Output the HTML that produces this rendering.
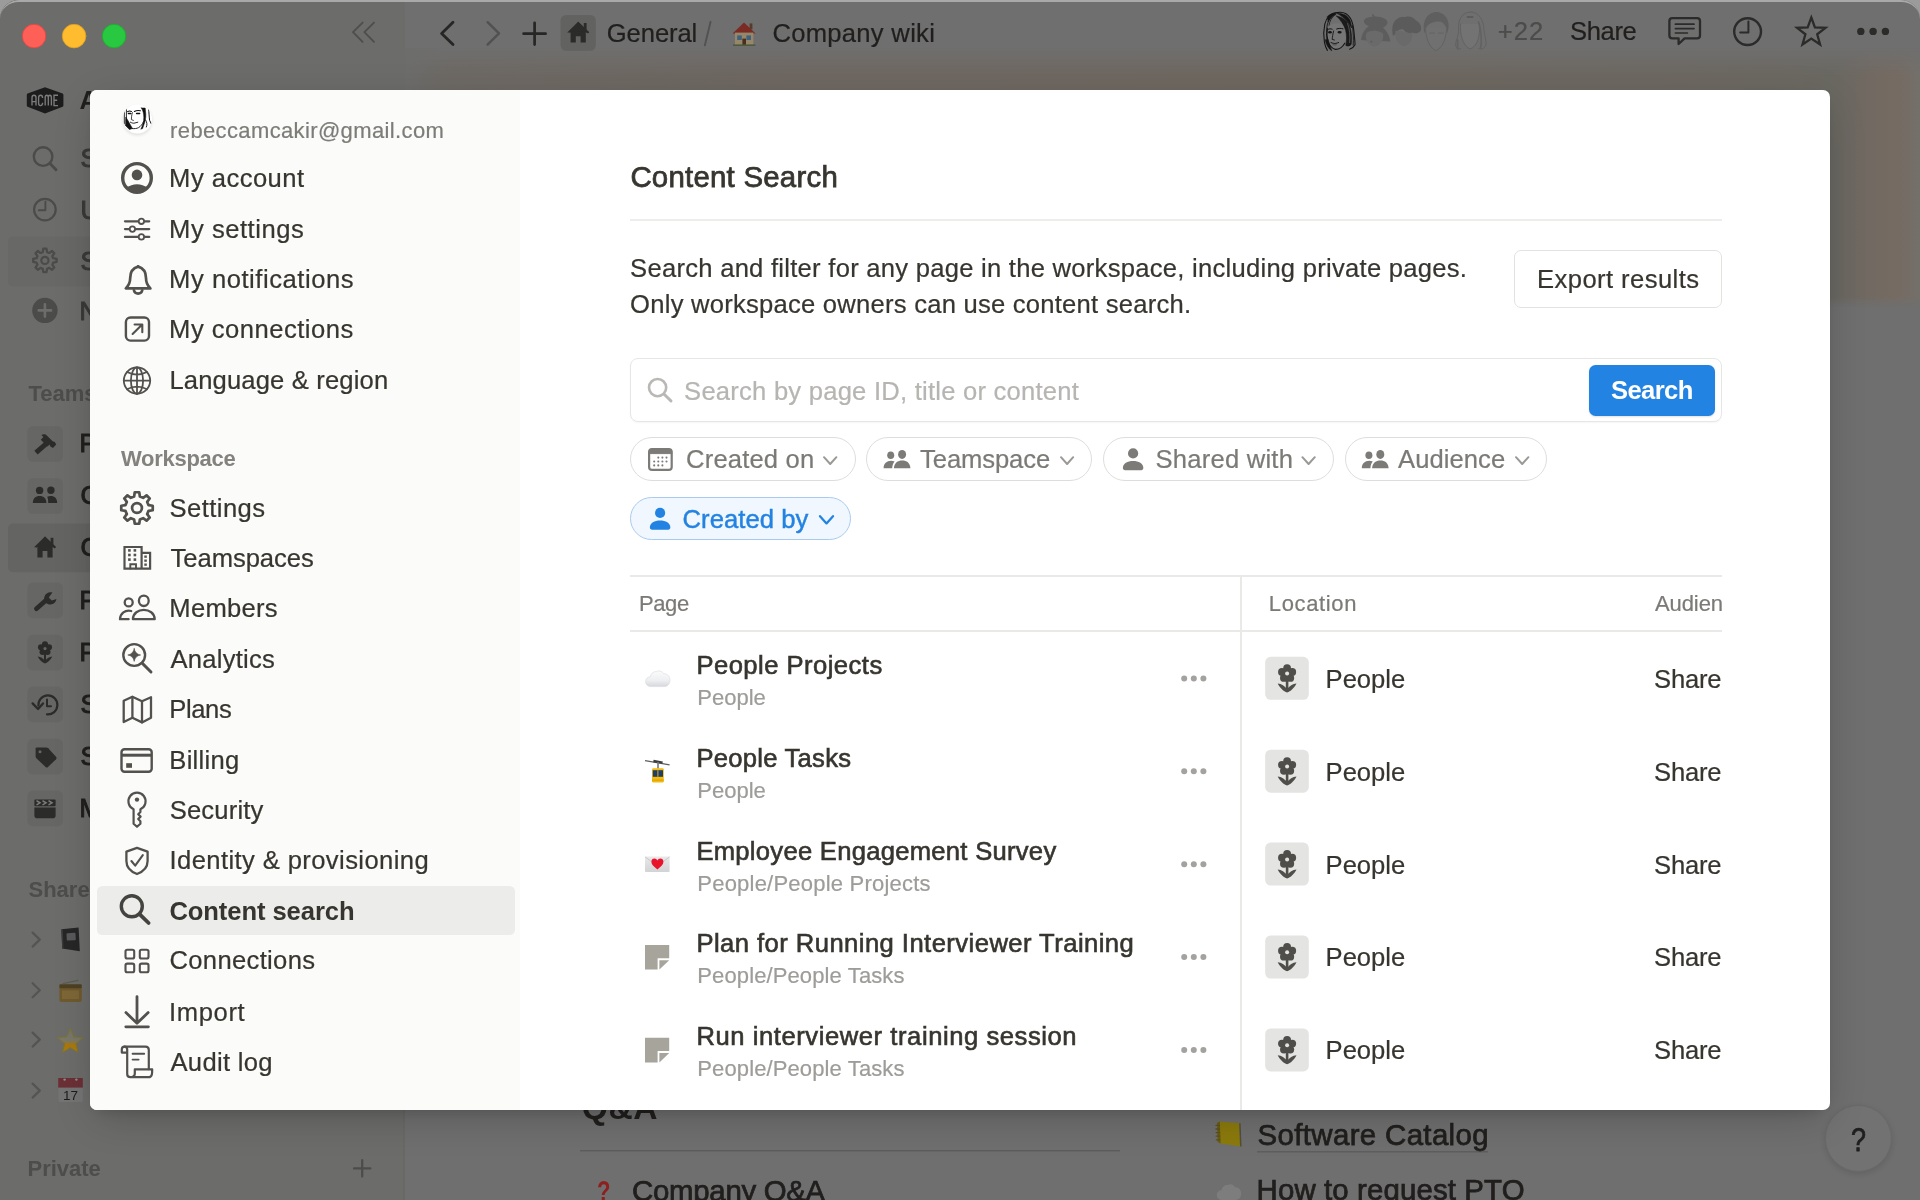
<!DOCTYPE html>
<html>
<head>
<meta charset="utf-8">
<title>Content Search</title>
<style>
*{box-sizing:border-box;margin:0;padding:0}
html,body{width:1920px;height:1200px;overflow:hidden;background:#9b9b9b;font-family:"Liberation Sans",sans-serif;}
#win{position:absolute;left:0;top:0;width:1920px;height:1200px;border-radius:19px 19px 0 0;overflow:hidden;background:#6f6f6f;}
#topline{position:absolute;left:0;top:0;width:1920px;height:60px;border-top:2px solid #a9a9a9;border-radius:19px 19px 0 0;z-index:9}
.abs{position:absolute}
.t{position:absolute;white-space:nowrap;line-height:1;transform-origin:0 50%}
#bgside{position:absolute;left:0;top:0;width:405px;height:1200px;background:#6c6c6b}
#cover{position:absolute;left:405px;top:48px;width:1515px;height:260px;background:linear-gradient(90deg,#6d6964 0,#6f6862 25%,#6f6861 60%,#6c6862 92%,#696861 94.2%,#6d6862 95.4%,#736a62 97.2%,#756b63 98.6%,#73706a 100%);-webkit-mask-image:linear-gradient(180deg,transparent 0,rgba(0,0,0,.5) 12px,#000 27px,#000 249px,transparent 259px);mask-image:linear-gradient(180deg,transparent 0,rgba(0,0,0,.5) 12px,#000 27px,#000 249px,transparent 259px)}
#shadow{position:absolute;left:96px;top:96px;width:1728px;height:1010px;border-radius:8px;box-shadow:0 9px 40px rgba(0,0,0,.22),0 5px 14px rgba(0,0,0,.14),0 0 0 1px rgba(0,0,0,.04)}
#modal{position:absolute;left:90px;top:90px;width:1740px;height:1020px;background:#fff;border-radius:7px;overflow:hidden;}
#mside{position:absolute;left:0;top:0;width:430px;height:1020px;background:#fbfbfa}
#sel{position:absolute;left:7.3px;top:796.2px;width:417.8px;height:48.4px;border-radius:5.5px;background:#ececeb}

#clipr{position:absolute;left:0;top:0;width:1722px;height:1200px;overflow:hidden;will-change:transform}
.hl{position:absolute;background:#e9e9e7}
.pill{position:absolute;border:1.4px solid #dddddb;border-radius:22px;background:#fff}
</style>
</head>
<body>
<div id="win">
  <div id="bgside"></div>
  <div id="cover"></div>
  <div class="abs" style="left:405px;top:48px;width:44px;height:262px;background:linear-gradient(90deg,#6d6d6c 0,rgba(110,110,109,0) 100%)"></div>
  <div class="abs" style="left:403.4px;top:306px;width:1.6px;height:894px;background:#696968"></div>
  <div class="abs" style="left:0;top:0;width:1920px;height:1200px;will-change:transform">
  <svg class="abs" style="left:0;top:0" width="1920" height="1200" viewBox="0 0 1920 1200" fill="none" stroke-linecap="round" stroke-linejoin="round">
<circle cx="34.1" cy="36.1" r="11.8" fill="#fe5f57" stroke="#e2463f" stroke-width="0.8"/>
<circle cx="74.1" cy="36.1" r="11.8" fill="#febc2e" stroke="#dfa023" stroke-width="0.8"/>
<circle cx="114.1" cy="36.1" r="11.8" fill="#28c840" stroke="#1dab2f" stroke-width="0.8"/>
<path d="M362.6 22.6 L353 32.2 L362.6 41.8 M374 22.6 L364.4 32.2 L374 41.8" stroke="#4e4e4d" stroke-width="1.9"/>
<path d="M453 22.2 L441.6 33.4 L453 44.6" stroke="#262625" stroke-width="2.8"/>
<path d="M487.6 22.2 L499 33.4 L487.6 44.6" stroke="#515150" stroke-width="2.4"/>
<path d="M534.6 22.8 V44.6 M523.6 33.7 H545.6" stroke="#262625" stroke-width="2.7"/>
<rect x="560.6" y="15" width="35.2" height="35.8" rx="5.5" fill="#626261" stroke="none"/>
<g stroke="none" fill="#2b2b2a"><path d="M578.2 21.8 L589.2 32.2 L587.8 33.6 L578.2 25.0 L568.6 33.6 Z"/><path d="M578.2 21.8 L589.2 32.4 L567.2 32.4 Z"/><rect x="583.8" y="23.0" width="2.8" height="7" /><path d="M570.6 31.2 H585.8 V42.6 H580.6 V36.2 H575.8 V42.6 H570.6 Z"/></g>
<path d="M710.6 21.8 L704.8 45.4" stroke="#525251" stroke-width="1.9"/>
<g stroke="none"><path d="M732.6 33.4 L744 22.6 L755.6 33.4 Z" fill="#7a2c24"/><rect x="749.6" y="23.4" width="2.8" height="6" fill="#5a3a2a"/><rect x="735" y="32.6" width="18.4" height="12.6" fill="#97876a"/><rect x="737.2" y="35.4" width="4.6" height="4.6" fill="#3c627e"/><rect x="746.4" y="35.4" width="4.6" height="4.6" fill="#3c627e"/><rect x="742.4" y="38.6" width="3.6" height="6.6" fill="#4a2e1e"/><rect x="733" y="44.4" width="22.4" height="1.6" fill="#4d5a3c"/></g>
<g transform="translate(1323 11.6)" stroke="#151515" fill="none" stroke-linecap="round" stroke-linejoin="round"><path d="M4.4 17 C3.6 21 4 26 5.2 29.8 C6.6 33.8 9.2 37 12.6 37.8 C16.6 38 20 35 22.2 31 C23.4 27 23.8 22 23.2 17 C20 10 8 10 4.4 17 Z" fill="#767676" stroke="none"/><path d="M14 1 C8 1.2 3.4 5.8 1.8 12.6 C0.6 18 0.4 25 1.4 30.6 C2 34 3 36.6 4.4 38.8" stroke-width="1.1"/><path d="M14 1 C19.4 0 24.4 1.8 27.4 6.6 C29.8 10.6 30.8 16.6 31.2 22.6 C31.6 27.6 32.2 31 32 33.2 C31 35.4 29 36.8 26.6 37.6" stroke-width="1.1"/><path d="M13 2.4 C8.6 4 5.4 8 4.2 13.4 C3.4 18 3.4 24 4 28" stroke-width="0.9"/><path d="M11.6 3.6 C8.4 6 6.6 9.6 6 13.6" stroke-width="0.8"/><path d="M4.4 4.8 C7 2.4 10.4 1.4 13 2.2 C9.400 4 6.600 6.8 5.200 10 Z" fill="#151515" stroke-width="0.5"/><path d="M14.6 2 C19.6 1.4 24.4 3.6 26.6 8 C27.8 10.6 28.4 13.6 28.6 16.4 C26 11 21.6 6 14.6 2 Z" fill="#151515" stroke-width="0.6"/><path d="M13.4 4.400 C17.6 8.4 21 13 22.600 18.6 C23.800 23.6 23.800 29 22.800 33.800 C24.600 35 26.800 34.600 28.200 32.800 C29 27 28.600 20 26.800 14.600 C24.600 9.200 19.600 5.400 13.400 4.400 Z" fill="#1b1b1b" stroke-width="0.5"/><path d="M24.6 12 C26.6 17 27.4 24 26.6 31" stroke="#6a6a6a" stroke-width="0.7"/><path d="M29.4 14 C30.2 20 30.600 27 30.200 33.600" stroke-width="0.9"/><path d="M4.4 16.8 C3.6 20.8 3.8 25.8 5 29.8 C6.4 33.8 9 37 12.4 37.8 C16.4 38 19.600 35.200 21.800 31.600" stroke-width="1.1"/><path d="M2.2 28.4 C3 33 5.4 37.200 8.800 39.200 C7.200 35 6 31.200 5 27.600 Z" fill="#151515" stroke-width="0.5"/><path d="M4.8 18 C6 17 7.800 17 9.200 17.600 M13.600 17.400 C15.600 16.600 17.800 16.600 20 17.200" stroke-width="1"/><ellipse cx="7" cy="20.6" rx="1.9" ry="1.2" fill="#151515" stroke="none"/><ellipse cx="16.6" cy="20.6" rx="2.1" ry="1.2" fill="#151515" stroke="none"/><path d="M10.600 19.400 C9.800 22.600 9.400 25.600 9.200 27.800 L11.400 28.400" stroke-width="0.9"/><path d="M8 31 C10 31.800 11.600 32 12.800 31.800 C14 31.600 14.800 31.200 15.600 30.900" stroke-width="1"/><path d="M10 33.200 H13.200" stroke-width="0.7" stroke="#3a3a3a"/></g><g stroke="none"><path d="M1361 40 C1362 33 1365 29 1369 26 C1363 24 1362 19 1368 17.4 C1374 15.6 1382 16.2 1386 19.6 C1389 22.6 1387 26 1383 27.4 C1387 31 1389.6 36 1390.4 41.4 L1381.6 41 C1382 36 1379 31.6 1374.6 30.4 C1370 31.6 1367 36 1367.6 40.6 Z" fill="#5d5d5d"/><path d="M1372.600 14.800 L1374.800 17.600" stroke="#5d5d5d" stroke-width="1.4"/><path d="M1366.4 33 C1364.6 39 1367.600 45.000 1374.000 46.600 C1380.400 45.600 1384.400 40.000 1383.000 33.600 C1380 30 1370 29.600 1366.400 33 Z" fill="#6a6a6a"/><circle cx="1371.4" cy="41.6" r="0.9" fill="#585858"/></g><g stroke="none"><path d="M1393 36 C1391.4 28 1392.6 21.6 1397 19 C1400 16.4 1404 17.4 1406 16.8 C1410 15.600 1414 17.600 1416 20.600 C1420 22.600 1422.400 27.000 1420.600 31.000 C1418 34.000 1414 33.600 1412 32.600 C1409 34 1405 32.600 1403.600 29.600 C1400 28.600 1397.600 30.000 1396.400 33.000 Z" fill="#5b5b5b"/><path d="M1395.4 31.000 C1394.600 38.000 1397.600 44.600 1403.600 46.200 C1409.600 45.600 1412.400 40.000 1412.400 33.000 C1406 33.600 1400 30.000 1395.400 31.000 Z" fill="#6a6a6a"/></g><g><path d="M1424.6 33.6 C1422 24 1425 14.6 1434 12.2 C1443 11 1449 18 1448.600 26.000 C1448.400 29.600 1447.600 32.000 1447.000 33.600 C1447 27.000 1444 22.600 1440.000 21.600 C1434 21.000 1428 23.600 1426.400 27.600 C1425.800 29.600 1425.400 31.600 1424.600 33.600 Z" fill="#5f5f5f" stroke="none"/><path d="M1425.6 27.600 C1425.400 36.000 1428.400 47.000 1435.600 50.600 C1442.600 48.600 1446.400 38.000 1446.600 27.600" fill="#707070" stroke="#626262" stroke-width="1"/><path d="M1429.600 33.000 H1434.400 M1438.400 33.000 H1443.200" stroke="#626262" stroke-width="0.9"/></g><g fill="none" stroke="#626262" stroke-width="1"><path d="M1470.600 12.000 C1462 12.000 1457.600 20.000 1458.600 30.000 C1458.800 36.000 1455.600 40.000 1455.600 45.000 C1456.600 48.600 1458.600 49.600 1460.600 48.600"/><path d="M1470.600 12.000 C1479 12.000 1483.600 20.000 1484.000 30.000 C1484.400 36.000 1486.600 40.000 1486.000 45.000 C1484.600 48.600 1481.600 49.600 1478.600 48.600"/><path d="M1460.600 24.000 C1459.600 34.000 1462.600 45.600 1470.000 49.000 C1477.400 46.600 1480.400 36.000 1479.600 24.000" fill="#737373"/><path d="M1467.600 17.000 H1472.600" stroke="#5c5c5c" stroke-width="1.8"/><path d="M1478.600 22.000 C1481 30.000 1482.000 40.000 1480.600 48.000" stroke-width="1.6"/><path d="M1457.600 40 V49" stroke-width="1.6"/></g>
<path d="M1672.2 18.2 H1697.2 C1699 18.2 1700 19.2 1700 21 V35.6 C1700 37.4 1699 38.4 1697.2 38.4 H1684.6 L1678.6 44 V38.4 H1672.2 C1670.4 38.4 1669.4 37.4 1669.4 35.6 V21 C1669.4 19.2 1670.4 18.2 1672.2 18.2 Z" stroke="#2b2b2a" stroke-width="2.3"/>
<path d="M1675.4 24.2 H1694 M1675.4 28.6 H1694 M1675.4 33 H1687.4" stroke="#2b2b2a" stroke-width="1.7"/>
<circle cx="1747.6" cy="31.6" r="13.4" stroke="#2b2b2a" stroke-width="2.4"/><path d="M1748.4 21.6 V32.4 H1740.2" stroke="#2b2b2a" stroke-width="2"/>
<path d="M1811.3 17.5 L1814.9 27.4 L1825.5 27.8 L1817.2 34.3 L1820.1 44.5 L1811.3 38.6 L1802.5 44.5 L1805.4 34.3 L1797.1 27.8 L1807.7 27.4Z" stroke="#2b2b2a" stroke-width="2.3" stroke-linejoin="miter"/>
<circle cx="1860.8" cy="31.4" r="3.7" fill="#2b2b2a"/>
<circle cx="1873.1" cy="31.4" r="3.7" fill="#2b2b2a"/>
<circle cx="1885.4" cy="31.4" r="3.7" fill="#2b2b2a"/>
<path d="M45 87.2 L62.6 93.6 Q63.4 94 63.4 95 V105.4 Q63.4 106.4 62.6 106.8 L45 113.4 L27.6 106.8 Q26.8 106.4 26.8 105.4 V95 Q26.8 94 27.6 93.6 Z" fill="#1c1c1c"/>
<g stroke="#7c7c7c" stroke-width="1.35" stroke-linecap="butt" stroke-linejoin="miter"><path d="M32 105.6 V97.8 Q32 95.2 34 95.2 Q36 95.2 36 97.8 V105.6 M32 101.6 H36"/><path d="M42.6 98 Q42.6 95.2 40.6 95.2 Q38.6 95.2 38.6 97.8 V103 Q38.6 105.6 40.6 105.6 Q42.6 105.6 42.6 102.8"/><path d="M45.2 105.6 V97.6 Q45.2 95.2 46.8 95.2 Q48.3 95.2 48.3 97.6 V105.6 M48.3 97.6 Q48.3 95.2 49.8 95.2 Q51.400 95.2 51.400 97.600 V105.6"/><path d="M58 95.2 H54 V105.6 H58 M54 100.200 H57.200"/></g>
<circle cx="43.1" cy="156.6" r="9.3" stroke="#4b4b4a" stroke-width="2.4"/><path d="M50 163.6 L56 169.8" stroke="#4b4b4a" stroke-width="2.9"/>
<circle cx="44.9" cy="209.6" r="10.8" stroke="#4b4b4a" stroke-width="2.2"/><path d="M45.4 201.6 V210.2 H38.8" stroke="#4b4b4a" stroke-width="1.9"/>
<rect x="8" y="236.4" width="392" height="50" rx="5" fill="#686867"/>
<path d="M42.70 252.09 L43.33 248.71 L46.47 248.71 L47.10 252.09 L49.22 252.96 L52.06 251.02 L54.28 253.24 L52.34 256.08 L53.21 258.20 L56.59 258.83 L56.59 261.97 L53.21 262.60 L52.34 264.72 L54.28 267.56 L52.06 269.78 L49.22 267.84 L47.10 268.71 L46.47 272.09 L43.33 272.09 L42.70 268.71 L40.58 267.84 L37.74 269.78 L35.52 267.56 L37.46 264.72 L36.59 262.60 L33.21 261.97 L33.21 258.83 L36.59 258.20 L37.46 256.08 L35.52 253.24 L37.74 251.02 L40.58 252.96Z" stroke="#4b4b4a" stroke-width="2.3"/><circle cx="44.9" cy="260.4" r="3.6" stroke="#4b4b4a" stroke-width="2.2"/>
<circle cx="44.9" cy="310.4" r="12.7" fill="#4b4b4a"/><path d="M44.9 304.2 V316.6 M38.7 310.4 H51.1" stroke="#6d6d6c" stroke-width="2.6"/>
<rect x="27.4" y="426.2" width="35.6" height="35.6" rx="5.5" fill="#666665"/>
<rect x="27.4" y="478.2" width="35.6" height="35.6" rx="5.5" fill="#666665"/>
<rect x="27.4" y="582.6" width="35.6" height="35.6" rx="5.5" fill="#666665"/>
<rect x="27.4" y="634.8" width="35.6" height="35.6" rx="5.5" fill="#666665"/>
<rect x="27.4" y="686.6" width="35.6" height="35.6" rx="5.5" fill="#666665"/>
<rect x="27.4" y="738.8" width="35.6" height="35.6" rx="5.5" fill="#666665"/>
<rect x="27.4" y="790.6" width="35.6" height="35.6" rx="5.5" fill="#666665"/>
<rect x="8" y="523.6" width="392" height="48.6" rx="5" fill="#646463"/>
<path d="M36 452.6 L46.6 443.4" stroke="#2b2b2a" stroke-width="5" stroke-linecap="butt"/><path d="M41.4 435 C43.6 433.6 45.6 434.2 46.8 435.4 L52.6 441.2 L54.8 442 L56.2 444.6 L53 448 L50.4 446.6 L49.6 444.6 L47.4 446.4 L40.8 439.8 L43.4 437 Z" fill="#2b2b2a"/>
<g fill="#2b2b2a"><circle cx="39.6" cy="490.4" r="3.7"/><circle cx="50.9" cy="490.2" r="3.7"/><path d="M32.8 503 C32.8 498.4 35.6 496 39.6 496 C43.6 496 46.4 498.4 46.4 503 Z"/><path d="M47.2 496.8 C48.2 496.2 49.4 496 50.8 496 C54.6 496 57.2 498.4 57.2 503 H48.2 C48.2 500.4 48 498.4 47.2 496.8 Z"/></g>
<g stroke="none" fill="#2b2b2a"><path d="M45.0 536.6 L56.0 547.0 L54.6 548.4 L45.0 539.8 L35.4 548.4 Z"/><path d="M45.0 536.6 L56.0 547.2 L34.0 547.2 Z"/><rect x="50.6" y="537.8" width="2.8" height="7" /><path d="M37.4 546.0 H52.6 V557.4 H47.4 V551.0 H42.6 V557.4 H37.4 Z"/></g>
<path d="M36.4 608.8 L46 600.2" stroke="#2b2b2a" stroke-width="4.6"/><path d="M52.4 592.6 C49 591.6 45.4 593.4 44.4 596.8 C43.8 599 44.4 601 45.6 602.4 C47.6 604.6 50.8 605 53.2 603.8 C55 602.8 56.2 601 56.4 599 L51.8 600.6 L48.8 597.6 Z" fill="#2b2b2a"/>
<g transform="translate(45 648.6) scale(0.78) translate(-45 -648.6)"><circle cx="45.00" cy="643.20" r="3.9" fill="#2b2b2a"/><circle cx="50.14" cy="646.93" r="3.9" fill="#2b2b2a"/><circle cx="48.17" cy="652.97" r="3.9" fill="#2b2b2a"/><circle cx="41.83" cy="652.97" r="3.9" fill="#2b2b2a"/><circle cx="39.86" cy="646.93" r="3.9" fill="#2b2b2a"/><circle cx="45.00" cy="648.60" r="4.6" fill="#2b2b2a"/><circle cx="45.00" cy="648.60" r="2" fill="#666665"/><path d="M45.00 654.60 V665.80" stroke="#2b2b2a" stroke-width="2.6" fill="none"/><path d="M45.00 667.60 C41.50 666.60 38.00 663.10 35.60 658.60 C39.50 658.80 42.60 661.00 45.00 664.20 C47.40 661.00 50.50 658.80 54.40 658.60 C52.00 663.10 48.50 666.60 45.00 667.60 Z" fill="#2b2b2a"/></g>
<path d="M47 714.4 A9.5 9.5 0 1 0 38.4 705.6" stroke="#2b2b2a" stroke-width="2.2"/><path d="M32.6 703.4 L38 709 L43 703.4" stroke="#2b2b2a" stroke-width="2.3"/><path d="M47 699.6 V706.2 H51" stroke="#2b2b2a" stroke-width="2"/>
<path d="M36.8 747.4 H46.2 C47 747.4 47.6 747.6 48.2 748.2 L56 756.8 Q57 758 56 759.2 L48 767 Q46.8 768 45.6 767 L36.6 758.4 C36 757.8 35.6 757.2 35.6 756.4 V748.6 Q35.6 747.4 36.8 747.4 Z" fill="#2b2b2a"/><circle cx="40" cy="751.8" r="1.5" fill="#666665"/>
<path d="M34.4 807.6 H55.6 V815.4 Q55.6 818.2 52.8 818.2 H37.2 Q34.4 818.2 34.4 815.4 Z" fill="#2b2b2a"/><rect x="34.4" y="799.4" width="21.2" height="6.8" rx="1" fill="#2b2b2a"/><path d="M37 801 L40 802.8 L37 804.6 M43 801 L46 802.8 L43 804.6 M49 801 L52 802.8 L49 804.6" stroke="#7a7a79" stroke-width="1.5" stroke-linejoin="miter"/>
<path d="M32.6 932.6 L39.8 939.6 L32.6 946.6" stroke="#545453" stroke-width="2.2"/>
<path d="M32.6 983.2 L39.8 990.2 L32.6 997.2" stroke="#545453" stroke-width="2.2"/>
<path d="M32.6 1032.6 L39.8 1039.6 L32.6 1046.6" stroke="#545453" stroke-width="2.2"/>
<path d="M32.6 1083.6 L39.8 1090.6 L32.6 1097.6" stroke="#545453" stroke-width="2.2"/>
<g stroke="none"><path d="M61.4 929.2 L78.6 927.6 L79.8 951.2 L62.2 948.6 Z" fill="#262627"/><path d="M61.4 929.2 L62.2 948.6 L63.6 949 L62.8 929.6 Z" fill="#3b3b3d"/><rect x="66.6" y="933" width="9" height="7.4" rx="1" fill="#59595b" transform="rotate(-3 71 936)"/></g>
<g stroke="none"><rect x="59.4" y="986.4" width="22.4" height="15.6" rx="2" fill="#6f5a2e"/><rect x="59.4" y="984.2" width="22.4" height="4" rx="1" fill="#4f4022"/><path d="M63 983.6 L78 980.4" stroke="#5c5c4c" stroke-width="1.2"/><rect x="62" y="990.4" width="17" height="8.6" fill="#7d6737"/></g>
<defs><linearGradient id="stg" x1="0" y1="0" x2="0" y2="1"><stop offset="0" stop-color="#76756d"/><stop offset="0.5" stop-color="#7a786a"/><stop offset="0.68" stop-color="#a9780c"/><stop offset="1" stop-color="#b07c08"/></linearGradient></defs>
<path d="M70.3 1028.4 L73.8 1036.9 L83.0 1037.7 L76.0 1043.7 L78.2 1052.6 L70.3 1047.8 L62.4 1052.6 L64.6 1043.7 L57.6 1037.7 L66.8 1036.9Z" fill="url(#stg)" stroke="#7c7538" stroke-width="1.1" stroke-linejoin="round"/>
<g stroke="none"><rect x="58.2" y="1078" width="24.6" height="24" rx="1.5" fill="#747474"/><rect x="58.2" y="1078" width="24.6" height="9.6" fill="#6b3036"/><circle cx="64.6" cy="1079.6" r="1.2" fill="#8d8d8d"/><circle cx="76.4" cy="1079.6" r="1.2" fill="#8d8d8d"/><text x="70.4" y="1100" font-family="Liberation Sans" font-size="13.5" text-anchor="middle" fill="#1b1b1b">17</text></g>
<path d="M362.2 1160.2 V1176.6 M354 1168.4 H370.4" stroke="#4c4c4b" stroke-width="2.2"/>
<rect x="580" y="1150" width="540" height="1.4" fill="#5d5d5d" stroke="none"/>
<rect x="1257" y="1151.2" width="231" height="1.2" fill="#5a5a5a" stroke="none"/>
<g stroke="none"><path d="M1219.6 1121.6 L1240.6 1123.2 L1241.6 1146.6 L1220.4 1143.6 Z" fill="#8b7a0c"/><path d="M1217 1123 L1219.8 1121.6 L1220.6 1143.6 L1217.6 1142 Z" fill="#6a5c0a"/><path d="M1240.6 1123.2 L1241.6 1146.6 L1240 1146.4 L1239.2 1123.2 Z" fill="#4e4e4a"/><path d="M1216 1125.4 h3.4 M1216 1129 h3.4 M1216.2 1132.6 h3.4 M1216.2 1136.2 h3.4 M1216.4 1139.8 h3.4" stroke="#5a5026" stroke-width="1.3"/></g>
<path d="M1222 1200 C1218.6 1200 1216.8 1197.6 1216.8 1195 C1216.800 1192.200 1219.000 1190.200 1221.600 1190.200 C1222.000 1187.000 1224.600 1184.800 1227.600 1185.000 C1229.200 1184.000 1233.000 1183.800 1235.000 1187.200 C1238.800 1187.000 1241.200 1189.800 1241.200 1193.600 C1241.200 1197.400 1238.800 1200.000 1235.400 1200.000 Z" fill="#7d7d7e" stroke="none"/>
<defs><filter id="hsh" x="-30%" y="-30%" width="160%" height="160%"><feGaussianBlur stdDeviation="3"/></filter></defs><circle cx="1858.4" cy="1140.4" r="33.5" fill="#000" opacity="0.12" filter="url(#hsh)"/><circle cx="1858.4" cy="1138.4" r="33" fill="#727272" stroke="#696969" stroke-width="1"/>
</svg>
  <span class="t" style="left:606.81px;top:19px;font-size:25.60px;line-height:28px;color:#201f1d;letter-spacing:-0.098px;-webkit-text-stroke:0.22px #201f1d;">General</span>
<span class="t" style="left:772.41px;top:19px;font-size:25.60px;line-height:28px;color:#201f1d;letter-spacing:0.288px;-webkit-text-stroke:0.22px #201f1d;">Company wiki</span>
<span class="t" style="left:1497.71px;top:17px;font-size:25.60px;line-height:28px;color:#4c4c4b;letter-spacing:1.000px;-webkit-text-stroke:0.22px #4c4c4b;">+22</span>
<span class="t" style="left:1570.11px;top:17px;font-size:25.60px;line-height:28px;color:#201f1d;letter-spacing:-0.395px;-webkit-text-stroke:0.22px #201f1d;">Share</span>
<span class="t" style="left:581.70px;top:1089px;font-size:33.60px;line-height:37px;color:#201f1d;letter-spacing:0.616px;font-weight:bold;">Q&amp;A</span>
<span class="t" style="left:632.08px;top:1174px;font-size:29.40px;line-height:33px;color:#201f1d;letter-spacing:-0.287px;-webkit-text-stroke:0.75px #201f1d;">Company Q&amp;A</span>
<span class="t" style="left:1257.58px;top:1118px;font-size:29.40px;line-height:33px;color:#201f1d;letter-spacing:0.370px;-webkit-text-stroke:0.75px #201f1d;">Software Catalog</span>
<span class="t" style="left:1256.58px;top:1173px;font-size:29.40px;line-height:33px;color:#201f1d;letter-spacing:0.129px;-webkit-text-stroke:0.75px #201f1d;">How to request PTO</span>
<span class="t" style="left:596.55px;top:1174px;font-size:29.40px;line-height:33px;color:#8e1f1f;transform:scaleX(0.7500);font-weight:bold;">?</span>
<span class="t" style="left:1850.96px;top:1121px;font-size:33.00px;line-height:37px;color:#1f1f1f;transform:scaleX(0.8147);-webkit-text-stroke:0.75px #1f1f1f;">?</span>
<span class="t" style="left:79.60px;top:86px;font-size:25.60px;line-height:28px;color:#201f1d;font-weight:bold;">Acme Inc.</span>
<span class="t" style="left:80.40px;top:144px;font-size:25.60px;line-height:28px;color:#3a3a39;-webkit-text-stroke:0.95px #3a3a39;">Search</span>
<span class="t" style="left:80.40px;top:196px;font-size:25.60px;line-height:28px;color:#3a3a39;-webkit-text-stroke:0.95px #3a3a39;">Updates</span>
<span class="t" style="left:80.40px;top:247px;font-size:25.60px;line-height:28px;color:#3a3a39;-webkit-text-stroke:0.95px #3a3a39;">Settings &amp; members</span>
<span class="t" style="left:79.40px;top:297px;font-size:25.60px;line-height:28px;color:#3a3a39;-webkit-text-stroke:0.95px #3a3a39;">New page</span>
<span class="t" style="left:28.50px;top:381px;font-size:22.00px;line-height:25px;color:#4d4d4c;font-weight:bold;">Teamspaces</span>
<span class="t" style="left:79.40px;top:429px;font-size:25.60px;line-height:28px;color:#201f1d;-webkit-text-stroke:0.95px #201f1d;">Product</span>
<span class="t" style="left:80.40px;top:481px;font-size:25.60px;line-height:28px;color:#201f1d;-webkit-text-stroke:0.95px #201f1d;">Company</span>
<span class="t" style="left:80.40px;top:533px;font-size:25.60px;line-height:28px;color:#201f1d;-webkit-text-stroke:0.95px #201f1d;">General</span>
<span class="t" style="left:79.40px;top:586px;font-size:25.60px;line-height:28px;color:#201f1d;-webkit-text-stroke:0.95px #201f1d;">Platform</span>
<span class="t" style="left:79.40px;top:638px;font-size:25.60px;line-height:28px;color:#201f1d;-webkit-text-stroke:0.95px #201f1d;">People</span>
<span class="t" style="left:80.40px;top:690px;font-size:25.60px;line-height:28px;color:#201f1d;-webkit-text-stroke:0.95px #201f1d;">Support</span>
<span class="t" style="left:80.40px;top:742px;font-size:25.60px;line-height:28px;color:#201f1d;-webkit-text-stroke:0.95px #201f1d;">Sales</span>
<span class="t" style="left:79.40px;top:794px;font-size:25.60px;line-height:28px;color:#201f1d;-webkit-text-stroke:0.95px #201f1d;">Marketing</span>
<span class="t" style="left:28.50px;top:877px;font-size:22.00px;line-height:25px;color:#4d4d4c;font-weight:bold;">Shared</span>
<span class="t" style="left:27.50px;top:1156px;font-size:22.00px;line-height:25px;color:#4d4d4c;letter-spacing:-0.024px;font-weight:bold;">Private</span>
  </div>
  <div id="shadow"></div>
  <div id="modal"><div id="mside"><div id="sel"></div></div></div>
  <div id="clipr">
    <!-- boxes -->
    <div class="hl" style="left:630px;top:219.4px;width:1092px;height:1.6px;background:#ededec"></div>
    <div class="abs" style="left:1514px;top:250px;width:208px;height:58px;border:1.4px solid #e2e2e0;border-radius:7px;background:#fff"></div>
    <div class="abs" style="left:630px;top:358px;width:1092px;height:64.4px;border:1.8px solid #e6e6e4;border-radius:8px;background:#fff;box-shadow:0 1px 2px rgba(0,0,0,.04)"></div>
    <div class="abs" style="left:1589px;top:365px;width:126px;height:51px;border-radius:6.5px;background:#2383e2;box-shadow:0 1px 2px rgba(0,0,0,.12)"></div>
    <div class="pill" style="left:630.3px;top:437px;width:225.6px;height:44px"></div>
    <div class="pill" style="left:866.2px;top:437px;width:225.8px;height:44px"></div>
    <div class="pill" style="left:1103px;top:437px;width:231px;height:44px"></div>
    <div class="pill" style="left:1345px;top:437px;width:202.2px;height:44px"></div>
    <div class="pill" style="left:630.3px;top:497.2px;width:220.6px;height:42.8px;background:#f1f7fe;border-color:#a9caee"></div>
    <div class="hl" style="left:630px;top:575.2px;width:1092px;height:1.7px"></div>
    <div class="hl" style="left:630px;top:630.4px;width:1092px;height:1.7px"></div>
    <div class="hl" style="left:1240.2px;top:576px;width:1.7px;height:534px"></div>
    <svg class="abs" style="left:0;top:0" width="1920" height="1200" viewBox="0 0 1920 1200">
<defs><linearGradient id="cl" x1="0" y1="0" x2="0" y2="1"><stop offset="0" stop-color="#fbfbfc"/><stop offset="0.6" stop-color="#eeeff1"/><stop offset="1" stop-color="#d5d7db"/></linearGradient><linearGradient id="env" x1="0" y1="0" x2="0" y2="1"><stop offset="0" stop-color="#e9e9ea"/><stop offset="1" stop-color="#d2d3d5"/></linearGradient></defs>
<circle cx="657.6" cy="387.6" r="8.6" fill="none" stroke="#b9b8b5" stroke-width="2.6"/><path d="M664.2 394.2 L671 401" stroke="#b9b8b5" stroke-width="3" stroke-linecap="round"/>
<rect x="649.1" y="449.1" width="22.6" height="20.8" rx="3" fill="none" stroke="#7c7b77" stroke-width="2.2"/><path d="M649.1 453.6 V452 C649.1 450 650.2 449.1 652 449.1 H668.8 C670.6 449.1 671.7 450 671.7 452 V453.6 Z" fill="#7c7b77" stroke="#7c7b77" stroke-width="1"/>
<circle cx="658.3" cy="457.6" r="1.05" fill="#7c7b77"/>
<circle cx="662.4" cy="457.6" r="1.05" fill="#7c7b77"/>
<circle cx="666.5" cy="457.6" r="1.05" fill="#7c7b77"/>
<circle cx="654.2" cy="461.5" r="1.05" fill="#7c7b77"/>
<circle cx="658.3" cy="461.5" r="1.05" fill="#7c7b77"/>
<circle cx="662.4" cy="461.5" r="1.05" fill="#7c7b77"/>
<circle cx="666.5" cy="461.5" r="1.05" fill="#7c7b77"/>
<circle cx="654.2" cy="465.4" r="1.05" fill="#7c7b77"/>
<circle cx="658.3" cy="465.4" r="1.05" fill="#7c7b77"/>
<circle cx="662.4" cy="465.4" r="1.05" fill="#7c7b77"/>
<path d="M824.0 457.2 L830.2 464.0 L836.4 457.2" fill="none" stroke="#9a9995" stroke-width="2.0" stroke-linecap="round" stroke-linejoin="round"/>
<ellipse cx="890.7" cy="455.2" rx="3.5" ry="3.8" fill="#7c7b77"/><path d="M883.6 468.2 C883.6 463.6 886.8 460.8 891.0 460.8 C892.4 460.8 893.6 461 894.6 461.6 C893.2 463 892.4 465.4 892.2 468.2 Z" fill="#7c7b77"/><ellipse cx="902.1" cy="454.4" rx="4" ry="4.5" fill="#7c7b77"/><path d="M893.9 468.2 C894.2 463 897.8 460.6 902.2 460.6 C906.8 460.6 910.0 463 910.4 468.2 Z" fill="#7c7b77"/>
<path d="M1061.0 457.2 L1067.1 464.0 L1073.2 457.2" fill="none" stroke="#9a9995" stroke-width="2.0" stroke-linecap="round" stroke-linejoin="round"/>
<circle cx="1133.1" cy="453.4" r="5.1" fill="#7c7b77"/><path d="M1122.9 467.6 C1122.9 463.6 1127.5 461.0 1133.1 461.0 C1138.7 461.0 1143.3 463.6 1143.3 467.6 V468.0 C1143.3 469.4 1142.5 470.2 1141.1 470.2 H1125.1 C1123.7 470.2 1122.9 469.4 1122.9 468.0 Z" fill="#7c7b77"/>
<path d="M1302.4 457.2 L1308.6 464.0 L1314.8 457.2" fill="none" stroke="#9a9995" stroke-width="2.0" stroke-linecap="round" stroke-linejoin="round"/>
<ellipse cx="1368.9" cy="455.2" rx="3.5" ry="3.8" fill="#7c7b77"/><path d="M1361.8 468.2 C1361.8 463.6 1365.0 460.8 1369.2 460.8 C1370.6 460.8 1371.8 461 1372.8 461.6 C1371.4 463 1370.6 465.4 1370.4 468.2 Z" fill="#7c7b77"/><ellipse cx="1380.3" cy="454.4" rx="4" ry="4.5" fill="#7c7b77"/><path d="M1372.1 468.2 C1372.4 463 1376.0 460.6 1380.4 460.6 C1385.0 460.6 1388.2 463 1388.6 468.2 Z" fill="#7c7b77"/>
<path d="M1516.0 457.2 L1522.2 464.0 L1528.4 457.2" fill="none" stroke="#9a9995" stroke-width="2.0" stroke-linecap="round" stroke-linejoin="round"/>
<circle cx="660.1" cy="512.9" r="5.1" fill="#2383e2"/><path d="M649.9 527.1 C649.9 523.1 654.5 520.5 660.1 520.5 C665.7 520.5 670.3 523.1 670.3 527.1 V527.5 C670.3 528.9 669.5 529.7 668.1 529.7 H652.1 C650.7 529.7 649.9 528.9 649.9 527.5 Z" fill="#2383e2"/>
<path d="M820.0 516.2 L826.5 523.4 L833.0 516.2" fill="none" stroke="#2383e2" stroke-width="2.3" stroke-linecap="round" stroke-linejoin="round"/>
<circle cx="1184.2" cy="678.4" r="3" fill="#a3a29f"/>
<circle cx="1193.8" cy="678.4" r="3" fill="#a3a29f"/>
<circle cx="1203.4" cy="678.4" r="3" fill="#a3a29f"/>
<rect x="1265.2" y="656.8" width="43.6" height="43" rx="5.5" fill="#e4e4e2"/>
<circle cx="1287.10" cy="668.16" r="3.9" fill="#4f4e4a"/><circle cx="1292.24" cy="671.89" r="3.9" fill="#4f4e4a"/><circle cx="1290.27" cy="677.93" r="3.9" fill="#4f4e4a"/><circle cx="1283.93" cy="677.93" r="3.9" fill="#4f4e4a"/><circle cx="1281.96" cy="671.89" r="3.9" fill="#4f4e4a"/><circle cx="1287.10" cy="673.56" r="4.6" fill="#4f4e4a"/><circle cx="1287.10" cy="673.56" r="2" fill="#e3e3e1"/><path d="M1287.10 679.56 V690.76" stroke="#4f4e4a" stroke-width="2.6" fill="none"/><path d="M1287.10 692.56 C1283.60 691.56 1280.10 688.06 1277.70 683.56 C1281.60 683.76 1284.70 685.96 1287.10 689.16 C1289.50 685.96 1292.60 683.76 1296.50 683.56 C1294.10 688.06 1290.60 691.56 1287.10 692.56 Z" fill="#4f4e4a"/>
<circle cx="1184.2" cy="771.3" r="3" fill="#a3a29f"/>
<circle cx="1193.8" cy="771.3" r="3" fill="#a3a29f"/>
<circle cx="1203.4" cy="771.3" r="3" fill="#a3a29f"/>
<rect x="1265.2" y="749.7" width="43.6" height="43" rx="5.5" fill="#e4e4e2"/>
<circle cx="1287.10" cy="761.08" r="3.9" fill="#4f4e4a"/><circle cx="1292.24" cy="764.81" r="3.9" fill="#4f4e4a"/><circle cx="1290.27" cy="770.85" r="3.9" fill="#4f4e4a"/><circle cx="1283.93" cy="770.85" r="3.9" fill="#4f4e4a"/><circle cx="1281.96" cy="764.81" r="3.9" fill="#4f4e4a"/><circle cx="1287.10" cy="766.48" r="4.6" fill="#4f4e4a"/><circle cx="1287.10" cy="766.48" r="2" fill="#e3e3e1"/><path d="M1287.10 772.48 V783.68" stroke="#4f4e4a" stroke-width="2.6" fill="none"/><path d="M1287.10 785.48 C1283.60 784.48 1280.10 780.98 1277.70 776.48 C1281.60 776.68 1284.70 778.88 1287.10 782.08 C1289.50 778.88 1292.60 776.68 1296.50 776.48 C1294.10 780.98 1290.60 784.48 1287.10 785.48 Z" fill="#4f4e4a"/>
<circle cx="1184.2" cy="864.2" r="3" fill="#a3a29f"/>
<circle cx="1193.8" cy="864.2" r="3" fill="#a3a29f"/>
<circle cx="1203.4" cy="864.2" r="3" fill="#a3a29f"/>
<rect x="1265.2" y="842.6" width="43.6" height="43" rx="5.5" fill="#e4e4e2"/>
<circle cx="1287.10" cy="854.00" r="3.9" fill="#4f4e4a"/><circle cx="1292.24" cy="857.73" r="3.9" fill="#4f4e4a"/><circle cx="1290.27" cy="863.77" r="3.9" fill="#4f4e4a"/><circle cx="1283.93" cy="863.77" r="3.9" fill="#4f4e4a"/><circle cx="1281.96" cy="857.73" r="3.9" fill="#4f4e4a"/><circle cx="1287.10" cy="859.40" r="4.6" fill="#4f4e4a"/><circle cx="1287.10" cy="859.40" r="2" fill="#e3e3e1"/><path d="M1287.10 865.40 V876.60" stroke="#4f4e4a" stroke-width="2.6" fill="none"/><path d="M1287.10 878.40 C1283.60 877.40 1280.10 873.90 1277.70 869.40 C1281.60 869.60 1284.70 871.80 1287.10 875.00 C1289.50 871.80 1292.60 869.60 1296.50 869.40 C1294.10 873.90 1290.60 877.40 1287.10 878.40 Z" fill="#4f4e4a"/>
<circle cx="1184.2" cy="957.1" r="3" fill="#a3a29f"/>
<circle cx="1193.8" cy="957.1" r="3" fill="#a3a29f"/>
<circle cx="1203.4" cy="957.1" r="3" fill="#a3a29f"/>
<rect x="1265.2" y="935.5" width="43.6" height="43" rx="5.5" fill="#e4e4e2"/>
<circle cx="1287.10" cy="946.92" r="3.9" fill="#4f4e4a"/><circle cx="1292.24" cy="950.65" r="3.9" fill="#4f4e4a"/><circle cx="1290.27" cy="956.69" r="3.9" fill="#4f4e4a"/><circle cx="1283.93" cy="956.69" r="3.9" fill="#4f4e4a"/><circle cx="1281.96" cy="950.65" r="3.9" fill="#4f4e4a"/><circle cx="1287.10" cy="952.32" r="4.6" fill="#4f4e4a"/><circle cx="1287.10" cy="952.32" r="2" fill="#e3e3e1"/><path d="M1287.10 958.32 V969.52" stroke="#4f4e4a" stroke-width="2.6" fill="none"/><path d="M1287.10 971.32 C1283.60 970.32 1280.10 966.82 1277.70 962.32 C1281.60 962.52 1284.70 964.72 1287.10 967.92 C1289.50 964.72 1292.60 962.52 1296.50 962.32 C1294.10 966.82 1290.60 970.32 1287.10 971.32 Z" fill="#4f4e4a"/>
<circle cx="1184.2" cy="1050.0" r="3" fill="#a3a29f"/>
<circle cx="1193.8" cy="1050.0" r="3" fill="#a3a29f"/>
<circle cx="1203.4" cy="1050.0" r="3" fill="#a3a29f"/>
<rect x="1265.2" y="1028.4" width="43.6" height="43" rx="5.5" fill="#e4e4e2"/>
<circle cx="1287.10" cy="1039.84" r="3.9" fill="#4f4e4a"/><circle cx="1292.24" cy="1043.57" r="3.9" fill="#4f4e4a"/><circle cx="1290.27" cy="1049.61" r="3.9" fill="#4f4e4a"/><circle cx="1283.93" cy="1049.61" r="3.9" fill="#4f4e4a"/><circle cx="1281.96" cy="1043.57" r="3.9" fill="#4f4e4a"/><circle cx="1287.10" cy="1045.24" r="4.6" fill="#4f4e4a"/><circle cx="1287.10" cy="1045.24" r="2" fill="#e3e3e1"/><path d="M1287.10 1051.24 V1062.44" stroke="#4f4e4a" stroke-width="2.6" fill="none"/><path d="M1287.10 1064.24 C1283.60 1063.24 1280.10 1059.74 1277.70 1055.24 C1281.60 1055.44 1284.70 1057.64 1287.10 1060.84 C1289.50 1057.64 1292.60 1055.44 1296.50 1055.24 C1294.10 1059.74 1290.60 1063.24 1287.10 1064.24 Z" fill="#4f4e4a"/>
<path d="M650.8 686.6 C647.4 686.6 645.6 684.2 645.6 681.6 C645.6 678.8 647.8 676.8 650.4 676.8 C650.8 673.6 653.4 671.4 656.4 671.6 C658 670.6 661.8 670.4 663.8 673.8 C667.6 673.6 670 676.4 670 680.2 C670 684 667.6 686.6 664.2 686.6 Z" fill="url(#cl)" stroke="#d9dade" stroke-width="0.6"/>
<path d="M645 760.6 L669.6 764.8" stroke="#5d5d5f" stroke-width="1.2"/><path d="M653.4 761 L662.6 762.6" stroke="#3d3d40" stroke-width="2.4"/><path d="M658 762 V768.6" stroke="#77777a" stroke-width="1.6"/>
<rect x="652" y="768.2" width="11.8" height="14.4" rx="1.4" fill="#f3bb12"/><rect x="652.8" y="770.2" width="10.2" height="6.6" fill="#1f3d66"/><path d="M657.9 770.2 V776.8" stroke="#f3bb12" stroke-width="0.9"/><rect x="652" y="779.6" width="11.8" height="1" fill="#d79e08"/>
<rect x="645" y="856.6" width="24.6" height="15.4" rx="1" fill="url(#env)"/><path d="M645 856.8 L657.3 866.2 L669.6 856.8" fill="none" stroke="#c4c5c8" stroke-width="0.9"/>
<path d="M657.4 869.4 C653.6 866.6 651.4 864.4 651.4 861.8 C651.4 859.8 652.8 858.6 654.4 858.6 C655.7 858.6 656.8 859.4 657.4 860.6 C658 859.4 659.1 858.6 660.4 858.6 C662 858.6 663.4 859.8 663.4 861.8 C663.4 864.4 661.2 866.6 657.4 869.4 Z" fill="#e9132c"/>
<path d="M645.0 945.0 H669.2 V958.2 H657.6 V969.6 H645.0 Z" fill="#a6a49b"/><path d="M659.4 960.2 H669.2 L659.4 969.6 Z" fill="#a6a49b"/>
<path d="M645.0 1037.8 H669.2 V1051.0 H657.6 V1062.4 H645.0 Z" fill="#a6a49b"/><path d="M659.4 1053.0 H669.2 L659.4 1062.4 Z" fill="#a6a49b"/>
</svg>
    <span class="t" style="left:170.11px;top:118px;font-size:22.00px;line-height:25px;color:#7d7c78;letter-spacing:0.367px;-webkit-text-stroke:0.22px #7d7c78;">rebeccamcakir@gmail.com</span>
<span class="t" style="left:169.11px;top:164px;font-size:25.60px;line-height:28px;color:#37352f;letter-spacing:0.458px;-webkit-text-stroke:0.22px #37352f;">My account</span>
<span class="t" style="left:169.11px;top:215px;font-size:25.60px;line-height:28px;color:#37352f;letter-spacing:0.515px;-webkit-text-stroke:0.22px #37352f;">My settings</span>
<span class="t" style="left:169.11px;top:265px;font-size:25.60px;line-height:28px;color:#37352f;letter-spacing:0.533px;-webkit-text-stroke:0.22px #37352f;">My notifications</span>
<span class="t" style="left:169.11px;top:315px;font-size:25.60px;line-height:28px;color:#37352f;letter-spacing:0.481px;-webkit-text-stroke:0.22px #37352f;">My connections</span>
<span class="t" style="left:169.41px;top:366px;font-size:25.60px;line-height:28px;color:#37352f;letter-spacing:0.150px;-webkit-text-stroke:0.22px #37352f;">Language &amp; region</span>
<span class="t" style="left:121.00px;top:446px;font-size:22.00px;line-height:25px;color:#83827e;letter-spacing:-0.281px;font-weight:bold;">Workspace</span>
<span class="t" style="left:169.61px;top:494px;font-size:25.60px;line-height:28px;color:#37352f;letter-spacing:0.414px;-webkit-text-stroke:0.22px #37352f;">Settings</span>
<span class="t" style="left:170.51px;top:544px;font-size:25.60px;line-height:28px;color:#37352f;letter-spacing:-0.044px;-webkit-text-stroke:0.22px #37352f;">Teamspaces</span>
<span class="t" style="left:169.31px;top:594px;font-size:25.60px;line-height:28px;color:#37352f;letter-spacing:0.269px;-webkit-text-stroke:0.22px #37352f;">Members</span>
<span class="t" style="left:170.51px;top:645px;font-size:25.60px;line-height:28px;color:#37352f;letter-spacing:0.233px;-webkit-text-stroke:0.22px #37352f;">Analytics</span>
<span class="t" style="left:169.31px;top:695px;font-size:25.60px;line-height:28px;color:#37352f;letter-spacing:-0.411px;-webkit-text-stroke:0.22px #37352f;">Plans</span>
<span class="t" style="left:169.31px;top:746px;font-size:25.60px;line-height:28px;color:#37352f;letter-spacing:0.272px;-webkit-text-stroke:0.22px #37352f;">Billing</span>
<span class="t" style="left:169.71px;top:796px;font-size:25.60px;line-height:28px;color:#37352f;letter-spacing:0.175px;-webkit-text-stroke:0.22px #37352f;">Security</span>
<span class="t" style="left:169.51px;top:846px;font-size:25.60px;line-height:28px;color:#37352f;letter-spacing:0.397px;-webkit-text-stroke:0.22px #37352f;">Identity &amp; provisioning</span>
<span class="t" style="left:169.40px;top:897px;font-size:25.60px;line-height:28px;color:#37352f;letter-spacing:-0.090px;font-weight:bold;">Content search</span>
<span class="t" style="left:169.51px;top:946px;font-size:25.60px;line-height:28px;color:#37352f;letter-spacing:0.320px;-webkit-text-stroke:0.22px #37352f;">Connections</span>
<span class="t" style="left:169.11px;top:998px;font-size:25.60px;line-height:28px;color:#37352f;letter-spacing:0.592px;-webkit-text-stroke:0.22px #37352f;">Import</span>
<span class="t" style="left:170.51px;top:1048px;font-size:25.60px;line-height:28px;color:#37352f;letter-spacing:0.302px;-webkit-text-stroke:0.22px #37352f;">Audit log</span>
<span class="t" style="left:630.38px;top:160px;font-size:29.40px;line-height:33px;color:#37352f;letter-spacing:0.244px;-webkit-text-stroke:0.75px #37352f;">Content Search</span>
<span class="t" style="left:630.11px;top:254px;font-size:25.60px;line-height:28px;color:#37352f;letter-spacing:0.260px;-webkit-text-stroke:0.22px #37352f;">Search and filter for any page in the workspace, including private pages.</span>
<span class="t" style="left:630.11px;top:290px;font-size:25.60px;line-height:28px;color:#37352f;letter-spacing:0.238px;-webkit-text-stroke:0.22px #37352f;">Only workspace owners can use content search.</span>
<span class="t" style="left:1537.11px;top:265px;font-size:25.60px;line-height:28px;color:#37352f;letter-spacing:0.417px;-webkit-text-stroke:0.22px #37352f;">Export results</span>
<span class="t" style="left:684.11px;top:377px;font-size:25.60px;line-height:28px;color:#b6b5b2;letter-spacing:0.227px;-webkit-text-stroke:0.22px #b6b5b2;">Search by page ID, title or content</span>
<span class="t" style="left:1611.00px;top:376px;font-size:25.60px;line-height:28px;color:#ffffff;letter-spacing:-0.607px;font-weight:bold;">Search</span>
<span class="t" style="left:686.11px;top:445px;font-size:25.60px;line-height:28px;color:#7b7a76;letter-spacing:0.154px;-webkit-text-stroke:0.22px #7b7a76;">Created on</span>
<span class="t" style="left:920.11px;top:445px;font-size:25.60px;line-height:28px;color:#7b7a76;letter-spacing:-0.108px;-webkit-text-stroke:0.22px #7b7a76;">Teamspace</span>
<span class="t" style="left:1155.41px;top:445px;font-size:25.60px;line-height:28px;color:#7b7a76;letter-spacing:0.236px;-webkit-text-stroke:0.22px #7b7a76;">Shared with</span>
<span class="t" style="left:1398.11px;top:445px;font-size:25.60px;line-height:28px;color:#7b7a76;letter-spacing:0.041px;-webkit-text-stroke:0.22px #7b7a76;">Audience</span>
<span class="t" style="left:682.52px;top:505px;font-size:25.60px;line-height:28px;color:#2383e2;letter-spacing:0.072px;-webkit-text-stroke:0.45px #2383e2;">Created by</span>
<span class="t" style="left:639.11px;top:591px;font-size:22.00px;line-height:25px;color:#7b7a76;letter-spacing:-0.455px;-webkit-text-stroke:0.22px #7b7a76;">Page</span>
<span class="t" style="left:1268.81px;top:591px;font-size:22.00px;line-height:25px;color:#7b7a76;letter-spacing:0.634px;-webkit-text-stroke:0.22px #7b7a76;">Location</span>
<span class="t" style="left:1654.91px;top:591px;font-size:22.00px;line-height:25px;color:#7b7a76;letter-spacing:-0.075px;-webkit-text-stroke:0.22px #7b7a76;">Audience</span>
<span class="t" style="left:696.41px;top:651px;font-size:25.60px;line-height:28px;color:#37352f;letter-spacing:0.466px;-webkit-text-stroke:0.62px #37352f;">People Projects</span>
<span class="t" style="left:697.31px;top:685px;font-size:22.00px;line-height:25px;color:#9d9c99;-webkit-text-stroke:0.22px #9d9c99;">People</span>
<span class="t" style="left:1325.61px;top:665px;font-size:25.60px;line-height:28px;color:#37352f;letter-spacing:-0.036px;-webkit-text-stroke:0.22px #37352f;">People</span>
<span class="t" style="left:1654.11px;top:665px;font-size:25.60px;line-height:28px;color:#37352f;letter-spacing:-0.223px;-webkit-text-stroke:0.22px #37352f;">Shared</span>
<span class="t" style="left:696.41px;top:744px;font-size:25.60px;line-height:28px;color:#37352f;letter-spacing:0.259px;-webkit-text-stroke:0.62px #37352f;">People Tasks</span>
<span class="t" style="left:697.31px;top:778px;font-size:22.00px;line-height:25px;color:#9d9c99;-webkit-text-stroke:0.22px #9d9c99;">People</span>
<span class="t" style="left:1325.61px;top:758px;font-size:25.60px;line-height:28px;color:#37352f;letter-spacing:-0.036px;-webkit-text-stroke:0.22px #37352f;">People</span>
<span class="t" style="left:1654.11px;top:758px;font-size:25.60px;line-height:28px;color:#37352f;letter-spacing:-0.223px;-webkit-text-stroke:0.22px #37352f;">Shared</span>
<span class="t" style="left:696.41px;top:837px;font-size:25.60px;line-height:28px;color:#37352f;letter-spacing:0.278px;-webkit-text-stroke:0.62px #37352f;">Employee Engagement Survey</span>
<span class="t" style="left:697.31px;top:871px;font-size:22.00px;line-height:25px;color:#9d9c99;letter-spacing:0.218px;-webkit-text-stroke:0.22px #9d9c99;">People/People Projects</span>
<span class="t" style="left:1325.61px;top:851px;font-size:25.60px;line-height:28px;color:#37352f;letter-spacing:-0.036px;-webkit-text-stroke:0.22px #37352f;">People</span>
<span class="t" style="left:1654.11px;top:851px;font-size:25.60px;line-height:28px;color:#37352f;letter-spacing:-0.223px;-webkit-text-stroke:0.22px #37352f;">Shared</span>
<span class="t" style="left:696.41px;top:929px;font-size:25.60px;line-height:28px;color:#37352f;letter-spacing:0.452px;-webkit-text-stroke:0.62px #37352f;">Plan for Running Interviewer Training</span>
<span class="t" style="left:697.31px;top:963px;font-size:22.00px;line-height:25px;color:#9d9c99;letter-spacing:0.117px;-webkit-text-stroke:0.22px #9d9c99;">People/People Tasks</span>
<span class="t" style="left:1325.61px;top:943px;font-size:25.60px;line-height:28px;color:#37352f;letter-spacing:-0.036px;-webkit-text-stroke:0.22px #37352f;">People</span>
<span class="t" style="left:1654.11px;top:943px;font-size:25.60px;line-height:28px;color:#37352f;letter-spacing:-0.223px;-webkit-text-stroke:0.22px #37352f;">Shared</span>
<span class="t" style="left:696.41px;top:1022px;font-size:25.60px;line-height:28px;color:#37352f;letter-spacing:0.563px;-webkit-text-stroke:0.62px #37352f;">Run interviewer training session</span>
<span class="t" style="left:697.31px;top:1056px;font-size:22.00px;line-height:25px;color:#9d9c99;letter-spacing:0.117px;-webkit-text-stroke:0.22px #9d9c99;">People/People Tasks</span>
<span class="t" style="left:1325.61px;top:1036px;font-size:25.60px;line-height:28px;color:#37352f;letter-spacing:-0.036px;-webkit-text-stroke:0.22px #37352f;">People</span>
<span class="t" style="left:1654.11px;top:1036px;font-size:25.60px;line-height:28px;color:#37352f;letter-spacing:-0.223px;-webkit-text-stroke:0.22px #37352f;">Shared</span>
  </div>
  <svg class="abs" style="left:0;top:0" width="1920" height="1200" viewBox="0 0 1920 1200" fill="none" stroke="#53514d" stroke-linecap="round" stroke-linejoin="round">
<defs><clipPath id="cpAv"><circle cx="137.4" cy="119" r="14.6"/></clipPath><filter id="avsh" x="-30%" y="-30%" width="160%" height="160%"><feGaussianBlur stdDeviation="1.6"/></filter></defs>
<circle cx="137.4" cy="120.6" r="14.8" fill="#000" opacity="0.10" filter="url(#avsh)" stroke="none"/>
<circle cx="137.4" cy="119" r="14.6" fill="#ffffff" stroke="none"/>
<g clip-path="url(#cpAv)" stroke="#111" fill="none" stroke-linecap="round"><path d="M124.3 108 V123.4 M126.4 108 V120.6" stroke-width="0.9"/><path d="M126 117.4 L127.6 120 L132.4 128.4 L129.4 129.6 L125.4 125.4 Z" fill="#111" stroke-width="0.6"/><path d="M141.4 108 H145.2 L145.8 114 C146 117.6 145.2 121.6 144 124.6 L142.6 128.6 L140.8 129.2 C142.8 125.4 143.8 121.4 143.8 117.6 C143.8 113.6 143 110.6 141.4 108 Z" fill="#111" stroke-width="0.5"/><path d="M148.6 108 C149 113 149.2 117.4 149.6 120.4 L151.6 124.4" stroke-width="1"/><path d="M145.6 120 C147 122 147.4 124.6 146.4 127" stroke-width="0.9"/><path d="M127.6 111.6 C128.8 110.8 130.2 110.8 131.4 111.4 M134.4 111.4 C136.4 110.4 138.6 110.4 140.4 110.8" stroke-width="1.1"/><path d="M128.4 113.4 H130.8 M136.6 113.6 H139.6" stroke-width="1.5"/><path d="M132.4 112.6 C131.6 115 131.4 117.6 131.4 119.6 L133.4 120.4" stroke-width="0.8"/><path d="M130.4 122.2 C131.8 123 133 123.3 134 123.2 C135.4 123 136.6 122.4 137.8 122.2" stroke-width="0.9"/><path d="M132.4 128.6 C134.4 128.8 136.8 128.6 138.6 127.6 C140.6 126.4 142.4 124.4 143.6 121.6" stroke-width="0.9"/></g>
<defs><clipPath id="cpAcc"><circle cx="137" cy="177.9" r="14.2"/></clipPath></defs>
<circle cx="137" cy="177.9" r="14.3" stroke-width="3.4"/>
<circle cx="137" cy="174.9" r="5.3" fill="#53514d" stroke="none"/>
<ellipse cx="137" cy="196.6" rx="14.5" ry="12.4" fill="#53514d" stroke="none" clip-path="url(#cpAcc)"/>
<path d="M125 221.3 H149.2" stroke-width="2.3"/>
<circle cx="141.4" cy="221.3" r="2.7" fill="#fbfbfa" stroke-width="1.8"/>
<path d="M125 229.1 H149.2" stroke-width="2.3"/>
<circle cx="132.4" cy="229.1" r="2.7" fill="#fbfbfa" stroke-width="1.8"/>
<path d="M125 236.9 H149.2" stroke-width="2.3"/>
<circle cx="141.4" cy="236.9" r="2.7" fill="#fbfbfa" stroke-width="1.8"/>
<path d="M125.8 288.4 H150.4 C147.2 285.4 146 282.6 146 278 C146 271.8 143 268 138.1 266.6 C133.2 268 130.2 271.8 130.2 278 C130.2 282.6 129 285.4 125.8 288.4Z" stroke-width="2.7"/>
<path d="M133.9 290.2 A4.3 4.3 0 0 0 142.3 290.2" stroke-width="2.6"/>
<circle cx="138.1" cy="266.3" r="1.3" fill="#53514d" stroke="none"/>
<rect x="125.9" y="317.5" width="23.1" height="23.1" rx="4.6" stroke-width="2.4"/>
<path d="M132.6 334 L142.2 324.6 M134.6 324.5 H142.3 V332.3" stroke-width="2.1"/>
<g stroke-width="1.8"><circle cx="137" cy="380.6" r="13.2"/><ellipse cx="137" cy="380.6" rx="6.1" ry="13.2"/><path d="M137 367.4 V393.8 M123.8 380.6 H150.2 M127 372 Q137 377.2 147 372 M127 389.2 Q137 384 147 389.2"/></g>
<path d="M134.13 496.45 L134.76 492.26 L139.24 492.26 L139.87 496.45 L143.14 497.81 L146.55 495.29 L149.71 498.45 L147.19 501.86 L148.55 505.13 L152.74 505.76 L152.74 510.24 L148.55 510.87 L147.19 514.14 L149.71 517.55 L146.55 520.71 L143.14 518.19 L139.87 519.55 L139.24 523.74 L134.76 523.74 L134.13 519.55 L130.86 518.19 L127.45 520.71 L124.29 517.55 L126.81 514.14 L125.45 510.87 L121.26 510.24 L121.26 505.76 L125.45 505.13 L126.81 501.86 L124.29 498.45 L127.45 495.29 L130.86 497.81Z" stroke-width="2.7"/>
<circle cx="137" cy="508" r="4.9" stroke-width="2.7"/>
<g stroke-width="2.2" stroke-linejoin="miter"><path d="M124.5 568.6 V547 H141.6 V568.6 Z M141.6 552.8 H150.1 V568.6 H141.6"/><path d="M130.3 568.6 V564.2 H136 V568.6" stroke-width="1.9"/></g>
<rect x="128.1" y="549.1" width="2.6" height="2.6" fill="#53514d" stroke="none"/>
<rect x="128.1" y="553.7" width="2.6" height="2.6" fill="#53514d" stroke="none"/>
<rect x="128.1" y="558.3" width="2.6" height="2.6" fill="#53514d" stroke="none"/>
<rect x="133.6" y="549.1" width="2.6" height="2.6" fill="#53514d" stroke="none"/>
<rect x="133.6" y="553.7" width="2.6" height="2.6" fill="#53514d" stroke="none"/>
<rect x="133.6" y="558.3" width="2.6" height="2.6" fill="#53514d" stroke="none"/>
<rect x="144.3" y="555.5" width="2.5" height="2.3" fill="#53514d" stroke="none"/>
<rect x="144.3" y="559.5" width="2.5" height="2.3" fill="#53514d" stroke="none"/>
<rect x="144.3" y="563.5" width="2.5" height="2.3" fill="#53514d" stroke="none"/>
<g stroke-width="2.3"><circle cx="128.7" cy="602.4" r="4"/><ellipse cx="143.8" cy="600.8" rx="4.9" ry="5.2"/><path d="M131.2 611 C125 609.6 120.3 613.5 120 619.2 H128.6"/><path d="M132.9 619.2 C133.2 606.8 154.4 606.8 154.7 619.2 Z"/></g>
<circle cx="134.2" cy="655" r="10.9" stroke-width="2.4"/><path d="M142.4 663.4 L151 672" stroke-width="2.9"/>
<path d="M134.2 648.6 Q135.1 654.1 140.6 655 Q135.1 655.9 134.2 661.4 Q133.3 655.9 127.8 655 Q133.3 654.1 134.2 648.6Z" fill="#53514d" stroke-width="0.6"/>
<g stroke-width="2.3"><path d="M123.7 722 V700.8 L132.4 696.8 L142 701.2 L151 697.2 V717.8 L142 722.4 L132.4 717.8 Z"/><path d="M132.4 696.8 V717.8 M142 701.2 V722.4"/></g>
<rect x="121.5" y="749.2" width="30.2" height="22.6" rx="3" stroke-width="2.4"/><path d="M121.5 755.2 H151.7" stroke-width="3" stroke-linecap="butt"/>
<rect x="126.2" y="763.2" width="5.8" height="4.6" fill="#53514d" stroke="none"/>
<g stroke-width="2.2"><path d="M133.6 809.2 A8.6 8.6 0 1 1 140.4 809.2 V812 L138.2 814.2 L140.6 816.6 L138.2 819 L140.4 821.2 V823.8 L137 826.8 L133.6 823.8 Z"/></g><circle cx="137" cy="799.6" r="2.2" fill="#53514d" stroke="none"/>
<g stroke-width="2.3"><path d="M137 847.8 L147.6 851.6 V861 C147.6 867.4 143.4 871.6 137 874 C130.6 871.6 126.4 867.4 126.4 861 V851.6 Z"/><path d="M131.4 861 L135.2 865.6 L142.8 855.2" stroke-width="2.1"/></g>
<circle cx="131.8" cy="906.3" r="10.5" stroke-width="3.4" stroke="#45433f"/><path d="M139.8 914.4 L148.6 923" stroke-width="3.8" stroke="#45433f"/>
<rect x="125.5" y="949.8" width="8.7" height="8.7" rx="1.8" stroke-width="2.1"/>
<rect x="139.8" y="949.8" width="8.7" height="8.7" rx="1.8" stroke-width="2.1"/>
<rect x="125.5" y="963.6" width="8.7" height="8.7" rx="1.8" stroke-width="2.1"/>
<rect x="139.8" y="963.6" width="8.7" height="8.7" rx="1.8" stroke-width="2.1"/>
<path d="M137 996.6 V1022.6 M125.9 1012.6 L137 1023.2 L148.2 1012.6 M125.8 1026.8 H148.4" stroke-width="2.8"/>
<g stroke-width="2.2"><path d="M127.2 1052.6 H121.8 V1049.4 C121.8 1045.6 127.2 1045.6 127.2 1049.4 V1074 C127.2 1076 128.6 1077.2 130.4 1077.2 H148.6 C152.2 1077.2 152.2 1073.6 152.2 1069.4 H134.8 V1073.6 C134.8 1077.6 130.4 1077.2 130.4 1077.2"/><path d="M124.4 1046.6 H145.4 C147.6 1046.6 148.8 1047.8 148.8 1050 V1069.2"/><path d="M132.6 1053.8 H144.2 M132.6 1059.6 H138.6" stroke-width="1.9"/></g>
</svg>
  <div id="topline"></div>
</div>
</body>
</html>
